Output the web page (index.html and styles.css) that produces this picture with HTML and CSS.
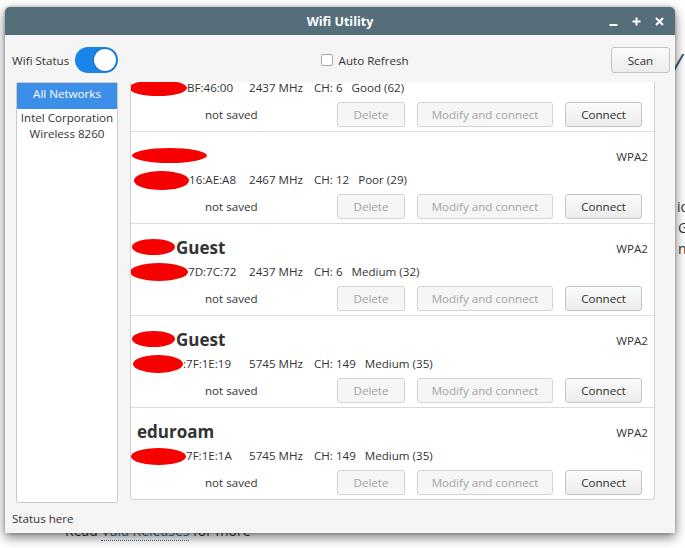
FILE: index.html
```html
<!DOCTYPE html>
<html>
<head>
<meta charset="utf-8">
<link rel="stylesheet" href="styles.css">
</head>
<body>
<div class="page">
  <span class="bg-slash">/</span>
  <span class="bg-io">io</span>
  <span class="bg-g">G</span>
  <span class="bg-n">n</span>
  <p class="bg-read">Read <a class="bg-link">Vala Releases</a> for more</p>
</div>

<div class="window">
  <div class="titlebar">
    <div class="title">Wifi Utility</div>
    <div class="wctl">
      <svg width="9" height="9" viewBox="0 0 9 9"><path d="M0.5 8h8" stroke="#fff" stroke-width="2"/></svg>
      <svg width="9" height="9" viewBox="0 0 9 9"><path d="M4.5 0.5v8M0.5 4.5h8" stroke="#fff" stroke-width="2"/></svg>
      <svg width="9" height="9" viewBox="0 0 9 9"><path d="M1 1l7 7M8 1l-7 7" stroke="#fff" stroke-width="2"/></svg>
    </div>
  </div>

  <div class="toolbar">
    <div class="tb-left">
      <span class="lbl">Wifi Status</span>
      <span class="toggle"><span class="knob"></span></span>
    </div>
    <div class="tb-mid">
      <span class="check"></span>
      <span class="lbl">Auto Refresh</span>
    </div>
    <button class="btn scan">Scan</button>
  </div>

  <div class="content">
    <div class="sidebar">
      <div class="side-item sel">All Networks</div>
      <div class="side-item">Intel Corporation<br>Wireless 8260</div>
    </div>
    <div class="list">
      <div class="list-inner">
        <div class="row">
          <div class="name-line"><span class="name"></span><span class="sec"></span></div>
          <div class="detail"><span class="mac"><span class="redact d1"></span>BF:46:00</span><span class="freq">2437 MHz</span><span class="ch">CH: 6</span><span class="sig">Good (62)</span></div>
          <div class="actions"><span class="saved">not saved</span><button class="btn dis del">Delete</button><button class="btn dis mod">Modify and connect</button><button class="btn con">Connect</button></div>
        </div>
        <div class="row">
          <div class="name-line"><span class="name"><span class="redact n2"></span></span><span class="sec">WPA2</span></div>
          <div class="detail"><span class="mac"><span class="redact d2"></span>16:AE:A8</span><span class="freq">2467 MHz</span><span class="ch">CH: 12</span><span class="sig">Poor (29)</span></div>
          <div class="actions"><span class="saved">not saved</span><button class="btn dis del">Delete</button><button class="btn dis mod">Modify and connect</button><button class="btn con">Connect</button></div>
        </div>
        <div class="row">
          <div class="name-line"><span class="name"><span class="redact n3"></span>Guest</span><span class="sec">WPA2</span></div>
          <div class="detail"><span class="mac"><span class="redact d3"></span>7D:7C:72</span><span class="freq">2437 MHz</span><span class="ch">CH: 6</span><span class="sig">Medium (32)</span></div>
          <div class="actions"><span class="saved">not saved</span><button class="btn dis del">Delete</button><button class="btn dis mod">Modify and connect</button><button class="btn con">Connect</button></div>
        </div>
        <div class="row">
          <div class="name-line"><span class="name"><span class="redact n3"></span>Guest</span><span class="sec">WPA2</span></div>
          <div class="detail"><span class="mac"><span class="redact d4"></span>:7F:1E:19</span><span class="freq">5745 MHz</span><span class="ch">CH: 149</span><span class="sig">Medium (35)</span></div>
          <div class="actions"><span class="saved">not saved</span><button class="btn dis del">Delete</button><button class="btn dis mod">Modify and connect</button><button class="btn con">Connect</button></div>
        </div>
        <div class="row">
          <div class="name-line"><span class="name">eduroam</span><span class="sec">WPA2</span></div>
          <div class="detail"><span class="mac"><span class="redact d5"></span>7F:1E:1A</span><span class="freq">5745 MHz</span><span class="ch">CH: 149</span><span class="sig">Medium (35)</span></div>
          <div class="actions"><span class="saved">not saved</span><button class="btn dis del">Delete</button><button class="btn dis mod">Modify and connect</button><button class="btn con">Connect</button></div>
        </div>
      </div>
    </div>
  </div>

  <div class="status">Status here</div>
</div>
</body>
</html>
```

FILE: styles.css
```css
* { box-sizing: border-box; }
html, body {
  margin: 0;
  width: 685px;
  height: 548px;
  overflow: hidden;
  background: #ffffff;
  font-family: "Open Sans", "Noto Sans", sans-serif;
  color: #333;
}
.page {
  position: relative;
  width: 685px;
  height: 548px;
}
.bg-slash {
  position: absolute;
  left: 673px;
  top: 44px;
  font-size: 26px;
  font-style: italic;
  color: #3b5a6e;
}
.bg-io, .bg-g, .bg-n {
  position: absolute;
  left: 677px;
  font-size: 14px;
  color: #333;
  line-height: 20px;
  white-space: nowrap;
}
.bg-io { top: 197px; }
.bg-g { top: 218px; left: 678px; }
.bg-n { top: 239px; left: 678px; }
.bg-read {
  position: absolute;
  left: 65px;
  top: 521px;
  margin: 0;
  font-size: 14px;
  line-height: 20px;
  color: #333;
  white-space: nowrap;
}
.bg-link {
  color: #3a6f9e;
  border-bottom: 1px dotted #3a6f9e;
}

.window {
  position: absolute;
  left: 5px;
  top: 7px;
  width: 670px;
  height: 526px;
  background: #f5f5f5;
  border-radius: 5px 5px 0 0;
  box-shadow: 0 4px 12px rgba(0, 0, 0, 0.55), 0 0 3px rgba(0, 0, 0, 0.25);
  display: flex;
  flex-direction: column;
}
.titlebar {
  height: 28px;
  flex: none;
  background: #546e7a;
  border-radius: 5px 5px 0 0;
  display: flex;
  align-items: center;
  justify-content: center;
  position: relative;
}
.title {
  color: #fff;
  font-weight: bold;
  font-size: 12.5px;
}
.wctl {
  position: absolute;
  right: 11px;
  top: 10px;
  display: flex;
  gap: 14px;
}
.wctl svg { display: block; }

.toolbar {
  height: 47px;
  flex: none;
  display: flex;
  align-items: center;
  padding: 3px 5px 0 7px;
}
.lbl { font-size: 11.6px; color: #333; }
.tb-left {
  display: flex;
  align-items: center;
  gap: 6px;
}
.toggle {
  width: 43px;
  height: 26px;
  border-radius: 13px;
  background: #1a84e8;
  display: flex;
  align-items: center;
  justify-content: flex-end;
  padding-right: 2px;
}
.knob {
  width: 22px;
  height: 22px;
  border-radius: 50%;
  background: #fff;
  box-shadow: 0 0 0 1px #1670c8;
}
.tb-mid {
  flex: 1;
  display: flex;
  align-items: center;
  justify-content: center;
  gap: 6px;
}
.check {
  width: 12px;
  height: 12px;
  border: 1px solid #a9a9a9;
  border-radius: 2px;
  background: #fff;
}
.btn {
  font-family: "Open Sans", "Noto Sans", sans-serif;
  font-size: 11.6px;
  height: 25px;
  border: 1px solid #c4c4c4;
  border-radius: 3px;
  background: linear-gradient(#fbfbfb, #ececec);
  color: #2e2e2e;
  padding: 0;
  display: flex;
  align-items: center;
  justify-content: center;
}
.scan {
  width: 59px;
  height: 26px;
}
.btn.dis {
  background: #f6f6f6;
  border-color: #d4d4d4;
  color: #a3a3a3;
}
.del { width: 68px; }
.mod { width: 136px; }
.con { width: 77px; }

.content {
  height: 421px;
  flex: none;
  display: flex;
  padding-left: 11px;
  gap: 12px;
}
.sidebar {
  width: 102px;
  height: 421px;
  background: #fff;
  border: 1px solid #cbcbcb;
  border-radius: 2px;
  font-size: 11.6px;
}
.side-item {
  text-align: center;
  color: #333;
  line-height: 16px;
  padding-top: 1px;
}
.side-item.sel {
  background: #3d8ee8;
  color: #fff;
  height: 26px;
  line-height: 22px;
  padding-top: 0;
}
.list {
  width: 525px;
  height: 418px;
  background: #fff;
  border: 1px solid #d3d3d3;
  border-top: none;
  border-radius: 0 0 3px 3px;
  overflow: hidden;
}
.list-inner {
  margin-top: -42px;
}
.row {
  height: 92px;
  border-bottom: 1px solid #dcdcdc;
  padding: 12px 6px 0 6px;
  font-size: 11.6px;
}
.name-line {
  height: 22px;
  display: flex;
  align-items: center;
  justify-content: space-between;
}
.name {
  font-size: 17px;
  font-weight: bold;
  color: #333;
  display: flex;
  align-items: center;
}
.sec {
  font-size: 11.6px;
  color: #333;
  padding-top: 2px;
}
.detail {
  margin-top: 6px;
  height: 16px;
  line-height: 16px;
  display: flex;
  align-items: center;
  white-space: nowrap;
}
.mac {
  width: 112px;
  display: flex;
  align-items: center;
}
.freq { width: 65px; }
.ch { margin-right: 9px; }
.actions {
  margin-top: 6px;
  height: 25px;
  display: flex;
  align-items: center;
  gap: 12px;
  padding-right: 6px;
}
.saved {
  margin-left: 68px;
  margin-right: auto;
}

.redact {
  display: inline-block;
  background: #f70000;
  border-radius: 50%;
  flex: none;
}
.d1 { width: 58px; height: 16px; margin-left: -8px; }
.d2 { width: 55px; height: 19px; margin-left: -3px; }
.d3 { width: 58px; height: 18px; margin-left: -7px; }
.d4 { width: 50px; height: 18px; margin-left: -4px; }
.d5 { width: 55px; height: 17px; margin-left: -6px; }
.n2 { width: 75px; height: 15px; margin-left: -5px; }
.n3 { width: 43px; height: 16px; margin-left: -5px; margin-right: 1px; }

.status {
  flex: 1;
  font-size: 11.6px;
  padding: 8px 0 0 7px;
  color: #333;
}
```
